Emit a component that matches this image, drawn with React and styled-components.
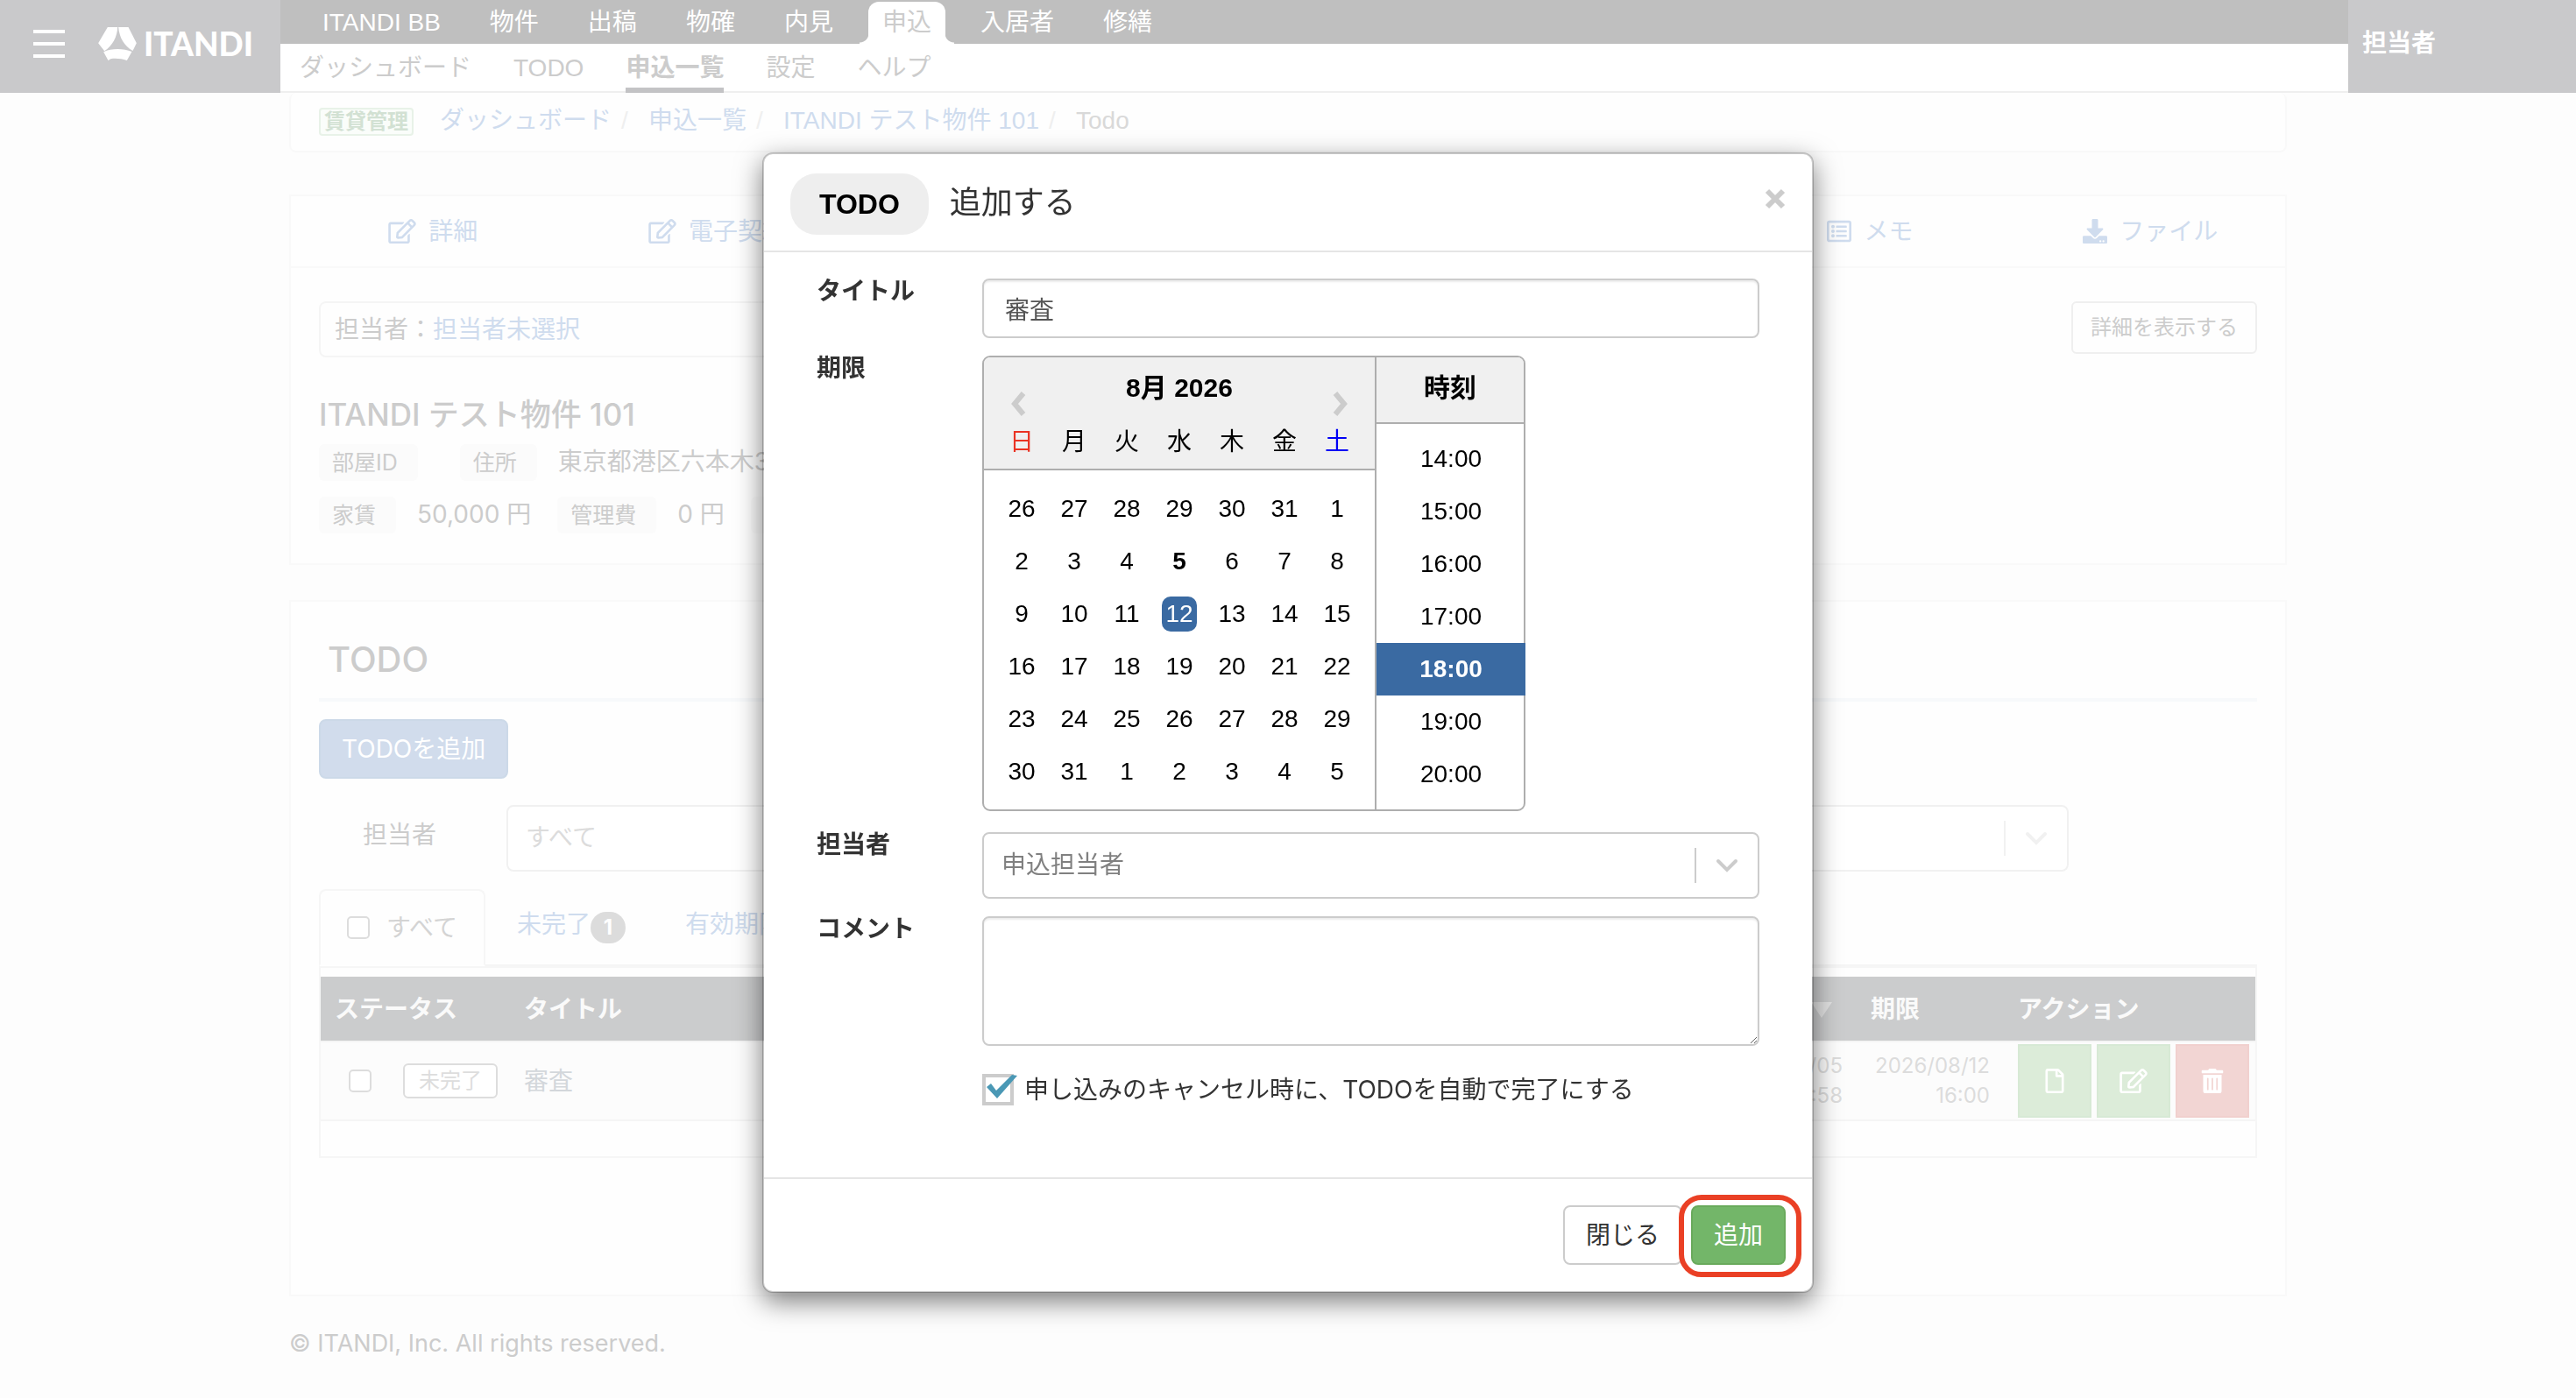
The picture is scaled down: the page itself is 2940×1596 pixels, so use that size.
import React from "react";
import styled, { createGlobalStyle, css } from "styled-components";
import { FaRegEdit, FaRegListAlt, FaDownload, FaRegFile, FaTrashAlt } from "react-icons/fa";

const sans = `Inter, "Noto Sans CJK JP", sans-serif`;
const helvetica = `"Liberation Sans", "Noto Sans CJK JP", sans-serif`;

const GlobalStyle = createGlobalStyle`
  *, *::before, *::after { box-sizing: border-box; }
  body {
    margin: 0;
    background: #fdfdfd;
    color: #cccccc;
    font-family: ${sans};
    font-size: 28px;
    line-height: 40px;
  }
  button, input, select, textarea { font: inherit; color: inherit; margin: 0; }
  a { color: #cfdcee; text-decoration: none; }
  ul, ol, dl, dd, h1, h2, p { margin: 0; padding: 0; list-style: none; }
`;

/* ---------- header ---------- */

const Header = styled.header`
  display: flex;
  height: 106px;
  font-family: ${helvetica};
`;

const Brand = styled.div`
  display: flex;
  align-items: center;
  gap: 38px;
  width: 320px;
  padding: 0 30px 6px 38px;
  background: #c9c9cb;
  color: #ffffff;
`;

const MenuButton = styled.button`
  display: flex;
  flex: none;
  flex-direction: column;
  gap: 10px;
  width: 36px;
  padding: 0;
  border: 0;
  background: none;
`;

const MenuBar = styled.span`
  width: 100%;
  height: 4px;
  background: #ffffff;
`;

const LogoLink = styled.a`
  display: flex;
  align-items: center;
  gap: 8px;
  color: #ffffff;
  font-family: Lato, sans-serif;
  font-size: 37px;
  font-weight: 900;
  line-height: 38px;
`;

const Navigation = styled.div`
  flex: 1;
  background: #ffffff;
  box-shadow: inset 0 -2px #efefef;
`;

const ServiceNav = styled.nav`
  display: flex;
  gap: 24px;
  height: 50px;
  padding: 2px 0 0 32px;
  background: #bfbfbf;
`;

const ServiceLink = styled.a`
  position: relative;
  padding: 4px 16px 0;
  border-radius: 12px 12px 0 0;
  color: #ffffff;
  ${(p) =>
    p.$active &&
    css`
      background: #ffffff;
      color: #cccccc;
      &::before,
      &::after {
        content: "";
        position: absolute;
        bottom: 0;
        width: 10px;
        height: 12px;
      }
      &::before {
        right: 100%;
        background: radial-gradient(circle at 0 0, #bfbfbf 10px, #ffffff 11px);
      }
      &::after {
        left: 100%;
        background: radial-gradient(circle at 100% 0, #bfbfbf 10px, #ffffff 11px);
      }
    `}
`;

const PageNav = styled.nav`
  display: flex;
  gap: 48px;
  height: 56px;
  padding-left: 22px;
`;

const PageLink = styled.a`
  height: 56px;
  padding-top: 8px;
  border-bottom: 6px solid ${(p) => (p.$active ? "#c3c3c5" : "transparent")};
  color: #cccccc;
  font-weight: ${(p) => (p.$active ? 700 : 400)};
`;

const Account = styled.div`
  display: flex;
  align-items: center;
  width: 260px;
  padding: 0 16px 6px;
  background: #c9c9cb;
  color: #ffffff;
  font-weight: 700;
`;

/* ---------- page ---------- */

const Page = styled.main`
  width: 100%;
  max-width: 2280px;
  margin: 0 auto;
`;

const BreadcrumbBar = styled.nav`
  display: flex;
  align-items: flex-start;
  height: 68px;
  padding: 12px 32px;
  border: 2px solid #f9f9f9;
  border-top: 0;
  border-radius: 8px;
  background: #fefefe;
  font-family: ${helvetica};
`;

const PlanBadge = styled.span`
  margin: 5px 30px 0 0;
  padding: 0 4px;
  border: 2px solid #e8f2e8;
  border-radius: 4px;
  background: #fafdfa;
  color: #d2e1d3;
  font-size: 24px;
  font-weight: 700;
  line-height: 28px;
`;

const Breadcrumbs = styled.ol`
  display: flex;
`;

const Crumb = styled.li`
  color: #d9d9d9;
  & + &::before {
    content: "/";
    display: inline-block;
    width: 42px;
    padding-left: 11px;
    color: #efefef;
  }
`;

const Panel = styled.section`
  margin-top: ${(p) => p.$gap}px;
  border: 2px solid #f9f9f9;
  background: #fefefe;
`;

const SectionTabs = styled.nav`
  display: grid;
  grid-template-columns: 325fr 325fr 988fr 332fr 308fr;
  height: 82px;
  border-bottom: 2px solid #f9f9f9;
`;

const SectionTab = styled.a`
  display: flex;
  grid-column: ${(p) => p.$column};
  align-items: center;
  justify-content: center;
  gap: 14px;
`;

const EditIcon = styled(FaRegEdit)`
  width: 32px;
  height: 28px;
`;

const Summary = styled.div`
  padding: 38px 32px 34px;
`;

const SummaryTop = styled.div`
  display: flex;
  align-items: flex-start;
  justify-content: space-between;
`;

const AssigneeBox = styled.div`
  flex: 0 0 50%;
  padding: 10px 16px;
  border: 2px solid #f5f5f5;
  border-radius: 8px;
`;

const DetailButton = styled.button`
  height: 60px;
  padding: 0 20px;
  border: 2px solid #efefef;
  border-radius: 6px;
  background: #fefefe;
  font-size: 24px;
`;

const PropertyName = styled.h1`
  margin: 40px 0 9px;
  font-size: 35px;
  font-weight: 500;
  line-height: 50px;
`;

const Facts = styled.dl`
  display: flex;
  height: 42px;
  & + & {
    margin-top: 18px;
  }
`;

const FactName = styled.dt`
  padding: 0 23px 0 15px;
  border-radius: 6px;
  background: #fbfbfb;
  font-size: 25px;
  line-height: 42px;
`;

const FactValue = styled.dd`
  margin: 0 ${(p) => (p.$empty ? 24 : 30)}px 0 24px;
  line-height: 40px;
`;

const TodoBody = styled.div`
  padding: 38px 32px 156px;
`;

const TodoHeading = styled.h2`
  padding: 0 10px 16px;
  border-bottom: 4px solid #f7f9fb;
  font-size: 40px;
  font-weight: 500;
  line-height: 56px;
`;

const AddTodoButton = styled.button`
  display: block;
  height: 68px;
  margin: 20px 0 30px;
  padding: 0 24px;
  border: 2px solid #ccd9e8;
  border-radius: 8px;
  background: #d1dcec;
  color: #ffffff;
`;

const FilterRow = styled.div`
  display: flex;
  padding-right: 215px;
`;

const FilterLabel = styled.label`
  width: 214px;
  padding: 14px 0 0 50px;
`;

const SelectFrame = styled.div`
  display: flex;
  flex: 1;
  align-items: center;
  height: 76px;
  border: 2px solid ${(p) => (p.$faded ? "#f1f1f1" : "#cccccc")};
  border-radius: 8px;
  background: #ffffff;
  color: ${(p) => (p.$faded ? "#dcdcdc" : "#808080")};
  svg {
    margin: 0 22px;
    color: ${(p) => (p.$faded ? "#f1f1f1" : "#cccccc")};
  }
`;

const PlainSelect = styled.select`
  flex: 1;
  align-self: stretch;
  padding: 0 20px 2px;
  border: 0;
  outline: 0;
  background: none;
  appearance: none;
`;

const SelectDivider = styled.span`
  width: 2px;
  height: 40px;
  background: ${(p) => (p.$faded ? "#f1f1f1" : "#cccccc")};
`;

const StatusTabs = styled.ul`
  display: flex;
  gap: 4px;
  margin-top: 20px;
  border-bottom: 2px solid #f5f5f5;
`;

const StatusTab = styled.li`
  display: flex;
  align-items: center;
  height: 88px;
  margin-bottom: -2px;
  padding: 0 30px;
  border: 2px solid transparent;
  border-radius: 8px 8px 0 0;
  ${(p) =>
    p.$active
      ? css`
          gap: 19px;
          border-color: #f6f6f6 #f6f6f6 #fefefe;
          background: #fefefe;
          color: #d4d4d4;
        `
      : css`
          padding-bottom: 8px;
        `}
`;

const FadedCheckbox = styled.input`
  flex: none;
  width: 26px;
  height: 26px;
  border: 2px solid #dddddd;
  border-radius: 5px;
  background: #ffffff;
  appearance: none;
`;

const CountBadge = styled.span`
  min-width: 40px;
  margin-top: 8px;
  border-radius: 18px;
  background: #dcdcdc;
  color: #ffffff;
  font-size: 24px;
  font-weight: 700;
  line-height: 36px;
  text-align: center;
`;

const TodoPane = styled.div`
  padding: 10px 0 40px;
  border: 2px solid #f6f6f6;
`;

const TodoTable = styled.table`
  width: 100%;
  border-collapse: collapse;
  table-layout: fixed;
`;

const HeadCell = styled.th`
  height: 74px;
  padding: 0 16px;
  background: #cbcccd;
  color: #fafafa;
  text-align: ${(p) => p.$align || "left"};
`;

const Cell = styled.td`
  height: 90px;
  padding: 0 ${(p) => (p.$tight ? 0 : 16)}px 0 16px;
  border-top: 2px solid #f5f5f5;
  border-bottom: 2px solid #f5f5f5;
  background: #fcfcfc;
  color: ${(p) => (p.$date ? "#dcdcdc" : "#d3d7db")};
  ${(p) =>
    p.$date &&
    css`
      font-size: 24px;
      line-height: 34px;
      text-align: right;
    `}
`;

const SortButton = styled.button`
  padding: 0 12px;
  border: 0;
  background: none;
  color: #e3e3e3;
  svg {
    display: block;
  }
`;

const StatusGroup = styled.div`
  display: flex;
  align-items: center;
  gap: 36px;
  padding-left: 16px;
`;

const StatusMark = styled.span`
  flex: none;
  padding: 0 16px;
  border: 2px solid #dddddd;
  border-radius: 6px;
  background: #ffffff;
  color: #dddddd;
  font-size: 24px;
  line-height: 36px;
`;

const Actions = styled.div`
  display: flex;
  gap: 6px;
`;

const ActionButton = styled.button`
  display: flex;
  flex: none;
  align-items: center;
  justify-content: center;
  width: 84px;
  height: 84px;
  padding: 0;
  border: 2px solid ${(p) => (p.$danger ? "#f1d0ce" : "#d7e9d5")};
  background: ${(p) => (p.$danger ? "#f2d5d3" : "#dcecd9")};
  color: #ffffff;
`;

const Footer = styled.footer`
  width: 100%;
  max-width: 2280px;
  margin: 34px auto 0;
  font-size: 27px;
`;

/* ---------- dialog ---------- */

const DialogLayer = styled.div`
  position: fixed;
  inset: 0;
  display: flex;
  align-items: flex-start;
  justify-content: center;
  padding-top: 174px;
`;

const Dialog = styled.form`
  width: 1200px;
  border: 2px solid rgba(0, 0, 0, 0.2);
  border-radius: 12px;
  background: #ffffff;
  background-clip: padding-box;
  box-shadow: 0 10px 30px rgba(0, 0, 0, 0.5);
  color: #333333;
`;

const DialogHeader = styled.div`
  display: flex;
  align-items: center;
  padding: 22px 30px 18px;
  border-bottom: 2px solid #e5e5e5;
`;

const KindPill = styled.span`
  padding: 0 33px;
  border-radius: 30px;
  background: #eeeeee;
  color: #000000;
  font-family: ${helvetica};
  font-size: 32px;
  font-weight: 700;
  line-height: 70px;
`;

const DialogTitle = styled.h2`
  flex: 1;
  padding: 0 0 4px 24px;
  font-size: 36px;
  font-weight: 400;
  line-height: 50px;
`;

const CloseButton = styled.button`
  padding: 0 0 12px;
  border: 0;
  background: none;
  color: #cccccc;
  svg {
    display: block;
  }
`;

const DialogBody = styled.div`
  display: grid;
  grid-template-columns: 189px 1fr;
  row-gap: 20px;
  padding: 30px 60px 82px;
`;

const FieldLabel = styled.label`
  font-weight: 700;
  line-height: 28px;
`;

const inputFrame = css`
  width: 100%;
  border: 2px solid #cccccc;
  border-radius: 8px;
  outline: 0;
  background: #ffffff;
  box-shadow: inset 0 2px 2px rgba(0, 0, 0, 0.075);
  color: #555555;
`;

const TextInput = styled.input`
  ${inputFrame}
  height: 68px;
  padding: 0 24px;
`;

const CommentArea = styled.textarea`
  ${inputFrame}
  display: block;
  height: 148px;
  padding: 12px 24px;
  resize: vertical;
`;

const Picker = styled.div`
  display: flex;
  justify-self: start;
  height: 520px;
  margin-bottom: 4px;
  border: 2px solid #aeaeae;
  border-radius: 9px;
  background: #ffffff;
  color: #000000;
  font-family: ${helvetica};
`;

const MonthPane = styled.div`
  width: 446px;
`;

const MonthHeader = styled.div`
  display: flex;
  justify-content: space-between;
  height: 66px;
  padding: 13px 30px 0;
  border-radius: 7px 0 0 0;
  background: #f0f0f0;
`;

const MonthName = styled.div`
  font-size: 30px;
  font-weight: 700;
  line-height: 44px;
`;

const MonthArrow = styled.button`
  align-self: flex-end;
  padding: 0;
  border: 0;
  background: none;
  color: #cccccc;
  line-height: 0;
  svg {
    margin-bottom: -2px;
  }
`;

const MonthGrid = styled.table`
  width: 100%;
  border-spacing: 0;
  table-layout: fixed;
  thead tr {
    background: #f0f0f0;
  }
  tbody tr:first-child td {
    height: 74px;
    padding-top: 14px;
  }
`;

const Weekday = styled.th`
  height: 63px;
  padding: 0;
  border-bottom: 2px solid #aeaeae;
  color: ${(p) => p.$color || "#000000"};
  font-weight: 400;
`;

const DayCell = styled.td`
  height: 60px;
  padding: 0;
  text-align: center;
`;

const DayEdge = styled.col`
  width: 13px;
`;

const DayButton = styled.button`
  width: 40px;
  height: 40px;
  padding: 0;
  border: 0;
  border-radius: 10px;
  background: ${(p) => (p.$selected ? "#3a6aa2" : "none")};
  color: ${(p) => (p.$selected ? "#ffffff" : "#000000")};
  font-weight: ${(p) => (p.$today ? 700 : 400)};
  line-height: 40px;
`;

const TimePane = styled.div`
  width: 170px;
  border-left: 2px solid #aeaeae;
`;

const TimeHeader = styled.div`
  height: 76px;
  padding: 13px 0;
  border-bottom: 2px solid #aeaeae;
  border-radius: 0 7px 0 0;
  background: #f0f0f0;
  font-size: 30px;
  font-weight: 700;
  line-height: 44px;
  text-align: center;
`;

const TimeList = styled.ul`
  margin-right: -2px;
  padding-top: 10px;
`;

const TimeButton = styled.button`
  display: block;
  width: 100%;
  height: 60px;
  padding: 0;
  border: 0;
  background: ${(p) => (p.$selected ? "#3a6aa2" : "none")};
  color: ${(p) => (p.$selected ? "#ffffff" : "#000000")};
  font-weight: ${(p) => (p.$selected ? 700 : 400)};
`;

const AutoComplete = styled.label`
  position: relative;
  display: flex;
  grid-column: 2;
  align-items: center;
  gap: 12px;
  height: 36px;
  margin-top: 12px;
  svg {
    position: absolute;
    top: 0;
    left: 4px;
    pointer-events: none;
  }
`;

const SquareCheckbox = styled.input`
  width: 36px;
  height: 36px;
  border: 4px solid #cccccc;
  background: #ffffff;
  appearance: none;
`;

const DialogFooter = styled.div`
  display: flex;
  justify-content: flex-end;
  gap: 10px;
  padding: 30px;
  border-top: 2px solid #e5e5e5;
`;

const FooterButton = styled.button`
  position: relative;
  height: 68px;
  padding: 0 24px;
  border: 2px solid ${(p) => (p.$primary ? "#69aa5c" : "#cccccc")};
  border-radius: 8px;
  background: ${(p) => (p.$primary ? "#73b669" : "#ffffff")};
  color: ${(p) => (p.$primary ? "#ffffff" : "#333333")};
`;

const Highlight = styled.span`
  position: absolute;
  inset: -14px -20px -16px -16px;
  border: 6px solid #ea4025;
  border-radius: 26px;
  pointer-events: none;
`;

/* ---------- drawings ---------- */

const LogoMark = () => (
  <svg width="44" height="38" viewBox="0 0 131 114" fill="currentColor" aria-hidden="true">
    <path d="M32 0h34C65 32 50 62 21 82L0 55Z" />
    <path d="M69 0h34l28 55-13 26C88 64 72 35 69 0Z" />
    <path d="M18 85C45 72 85 72 115 84l-17 30c-18-6-40-8-56-5l-8 5Z" />
  </svg>
);

const ChevronDown = () => (
  <svg width="26" height="18" viewBox="0 0 26 18" fill="none" stroke="currentColor" strokeWidth="4" strokeLinecap="round" aria-hidden="true">
    <path d="M3 4l10 10L23 4" />
  </svg>
);

const MonthChevron = ({ d }) => (
  <svg width="18" height="30" viewBox="0 0 18 30" fill="none" stroke="currentColor" strokeWidth="6" aria-hidden="true">
    <path d={d} />
  </svg>
);

const Cross = () => (
  <svg width="24" height="24" viewBox="0 0 24 24" fill="none" stroke="currentColor" strokeWidth="6" aria-hidden="true">
    <path d="M3 3l18 18M21 3L3 21" />
  </svg>
);

const CheckMark = () => (
  <svg width="36" height="32" viewBox="0 0 36 32" fill="#4a98b5" aria-hidden="true">
    <path d="M1 15l5-4 6 8L30 1l6 1-23 26Z" />
  </svg>
);

const SortArrow = () => (
  <svg width="24" height="18" viewBox="0 0 24 18" fill="currentColor" aria-hidden="true">
    <path d="M0 0h24L12 18Z" />
  </svg>
);

/* ---------- data ---------- */

const services = ["ITANDI BB", "物件", "出稿", "物確", "内見", "申込", "入居者", "修繕"];
const pages = ["ダッシュボード", "TODO", "申込一覧", "設定", "ヘルプ"];
const weekdays = ["日", "月", "火", "水", "木", "金", "土"];
const weekdayColors = { 日: "#ea3323", 土: "#0000f5" };
const weeks = [
  [26, 27, 28, 29, 30, 31, 1],
  [2, 3, 4, 5, 6, 7, 8],
  [9, 10, 11, 12, 13, 14, 15],
  [16, 17, 18, 19, 20, 21, 22],
  [23, 24, 25, 26, 27, 28, 29],
  [30, 31, 1, 2, 3, 4, 5],
];
const times = ["14:00", "15:00", "16:00", "17:00", "18:00", "19:00", "20:00"];

const AddTodoDialog = () => (
  <DialogLayer>
    <Dialog role="dialog" aria-labelledby="dialog-title" onSubmit={(e) => e.preventDefault()}>
      <DialogHeader>
        <KindPill>TODO</KindPill>
        <DialogTitle id="dialog-title">追加する</DialogTitle>
        <CloseButton type="button" aria-label="閉じる">
          <Cross />
        </CloseButton>
      </DialogHeader>
      <DialogBody>
        <FieldLabel htmlFor="todo-title">タイトル</FieldLabel>
        <TextInput id="todo-title" type="text" defaultValue="審査" />

        <FieldLabel as="span" id="due-label">期限</FieldLabel>
        <Picker role="group" aria-labelledby="due-label">
          <MonthPane>
            <MonthHeader>
              <MonthArrow type="button" aria-label="前の月">
                <MonthChevron d="M15 3L5 15l10 12" />
              </MonthArrow>
              <MonthName>8月 2026</MonthName>
              <MonthArrow type="button" aria-label="次の月">
                <MonthChevron d="M3 3l10 12L3 27" />
              </MonthArrow>
            </MonthHeader>
            <MonthGrid>
              <colgroup>
                <DayEdge />
                {weekdays.map((d) => (
                  <col key={d} />
                ))}
                <DayEdge />
              </colgroup>
              <thead>
                <tr>
                  <Weekday as="td" />
                  {weekdays.map((d) => (
                    <Weekday key={d} $color={weekdayColors[d]}>
                      {d}
                    </Weekday>
                  ))}
                  <Weekday as="td" />
                </tr>
              </thead>
              <tbody>
                {weeks.map((week, w) => (
                  <tr key={w}>
                    <DayCell />
                    {week.map((day) => (
                      <DayCell key={day}>
                        <DayButton type="button" $selected={w === 2 && day === 12} $today={w === 1 && day === 5}>
                          {day}
                        </DayButton>
                      </DayCell>
                    ))}
                    <DayCell />
                  </tr>
                ))}
              </tbody>
            </MonthGrid>
          </MonthPane>
          <TimePane>
            <TimeHeader>時刻</TimeHeader>
            <TimeList>
              {times.map((t) => (
                <li key={t}>
                  <TimeButton type="button" $selected={t === "18:00"}>
                    {t}
                  </TimeButton>
                </li>
              ))}
            </TimeList>
          </TimePane>
        </Picker>

        <FieldLabel htmlFor="todo-assignee">担当者</FieldLabel>
        <SelectFrame>
          <PlainSelect id="todo-assignee">
            <option>申込担当者</option>
          </PlainSelect>
          <SelectDivider />
          <ChevronDown />
        </SelectFrame>

        <FieldLabel htmlFor="todo-comment">コメント</FieldLabel>
        <CommentArea id="todo-comment" />

        <AutoComplete>
          <SquareCheckbox type="checkbox" defaultChecked />
          <CheckMark />
          申し込みのキャンセル時に、TODOを自動で完了にする
        </AutoComplete>
      </DialogBody>
      <DialogFooter>
        <FooterButton type="button">閉じる</FooterButton>
        <FooterButton type="submit" $primary>
          追加
          <Highlight />
        </FooterButton>
      </DialogFooter>
    </Dialog>
  </DialogLayer>
);

export default function App() {
  return (
    <>
      <GlobalStyle />
      <Header>
        <Brand>
          <MenuButton aria-label="メニュー">
            <MenuBar />
            <MenuBar />
            <MenuBar />
          </MenuButton>
          <LogoLink href="#">
            <LogoMark />
            ITANDI
          </LogoLink>
        </Brand>
        <Navigation>
          <ServiceNav>
            {services.map((s) => (
              <ServiceLink key={s} href="#" $active={s === "申込"}>
                {s}
              </ServiceLink>
            ))}
          </ServiceNav>
          <PageNav>
            {pages.map((p) => (
              <PageLink key={p} href="#" $active={p === "申込一覧"}>
                {p}
              </PageLink>
            ))}
          </PageNav>
        </Navigation>
        <Account>担当者</Account>
      </Header>

      <Page>
        <BreadcrumbBar>
          <PlanBadge>賃貸管理</PlanBadge>
          <Breadcrumbs>
            <Crumb>
              <a href="#">ダッシュボード</a>
            </Crumb>
            <Crumb>
              <a href="#">申込一覧</a>
            </Crumb>
            <Crumb>
              <a href="#">ITANDI テスト物件 101</a>
            </Crumb>
            <Crumb>Todo</Crumb>
          </Breadcrumbs>
        </BreadcrumbBar>

        <Panel $gap={48}>
          <SectionTabs>
            <SectionTab href="#" $column={1}>
              <EditIcon />
              詳細
            </SectionTab>
            <SectionTab href="#" $column={2}>
              <EditIcon />
              電子契約
            </SectionTab>
            <SectionTab href="#" $column={4}>
              <FaRegListAlt />
              メモ
            </SectionTab>
            <SectionTab href="#" $column={5}>
              <FaDownload />
              ファイル
            </SectionTab>
          </SectionTabs>
          <Summary>
            <SummaryTop>
              <AssigneeBox>
                担当者：<a href="#">担当者未選択</a>
              </AssigneeBox>
              <DetailButton>詳細を表示する</DetailButton>
            </SummaryTop>
            <PropertyName>ITANDI テスト物件 101</PropertyName>
            <Facts>
              <FactName>部屋ID</FactName>
              <FactValue $empty />
              <FactName>住所</FactName>
              <FactValue>東京都港区六本木3</FactValue>
            </Facts>
            <Facts>
              <FactName>家賃</FactName>
              <FactValue>50,000 円</FactValue>
              <FactName>管理費</FactName>
              <FactValue>0 円</FactValue>
              <FactName>敷金</FactName>
            </Facts>
          </Summary>
        </Panel>

        <Panel $gap={40}>
          <TodoBody>
            <TodoHeading>TODO</TodoHeading>
            <AddTodoButton>TODOを追加</AddTodoButton>
            <FilterRow>
              <FilterLabel htmlFor="filter-assignee">担当者</FilterLabel>
              <SelectFrame $faded>
                <PlainSelect id="filter-assignee">
                  <option>すべて</option>
                </PlainSelect>
                <SelectDivider $faded />
                <ChevronDown />
              </SelectFrame>
            </FilterRow>
            <StatusTabs>
              <StatusTab $active>
                <FadedCheckbox id="check-all" type="checkbox" />
                <label htmlFor="check-all">すべて</label>
              </StatusTab>
              <StatusTab>
                <a href="#">未完了</a>
                <CountBadge>1</CountBadge>
              </StatusTab>
              <StatusTab>
                <a href="#">有効期限</a>
              </StatusTab>
            </StatusTabs>
            <TodoPane>
              <TodoTable>
                <colgroup>
                  <col width="216" />
                  <col />
                  <col width="200" />
                  <col width="168" />
                  <col width="287" />
                </colgroup>
                <thead>
                  <tr>
                    <HeadCell>ステータス</HeadCell>
                    <HeadCell>タイトル</HeadCell>
                    <HeadCell $align="right">
                      <SortButton aria-label="並べ替え">
                        <SortArrow />
                      </SortButton>
                    </HeadCell>
                    <HeadCell>期限</HeadCell>
                    <HeadCell>アクション</HeadCell>
                  </tr>
                </thead>
                <tbody>
                  <tr>
                    <Cell $tight>
                      <StatusGroup>
                        <FadedCheckbox type="checkbox" aria-label="審査" />
                        <StatusMark>未完了</StatusMark>
                      </StatusGroup>
                    </Cell>
                    <Cell>審査</Cell>
                    <Cell $date>
                      2026/08/05
                      <br />
                      13:58
                    </Cell>
                    <Cell $date>
                      2026/08/12
                      <br />
                      16:00
                    </Cell>
                    <Cell $tight>
                      <Actions>
                        <ActionButton aria-label="詳細">
                          <FaRegFile />
                        </ActionButton>
                        <ActionButton aria-label="編集">
                          <EditIcon />
                        </ActionButton>
                        <ActionButton aria-label="削除" $danger>
                          <FaTrashAlt />
                        </ActionButton>
                      </Actions>
                    </Cell>
                  </tr>
                </tbody>
              </TodoTable>
            </TodoPane>
          </TodoBody>
        </Panel>
      </Page>
      <Footer>© ITANDI, Inc. All rights reserved.</Footer>

      <AddTodoDialog />
    </>
  );
}
